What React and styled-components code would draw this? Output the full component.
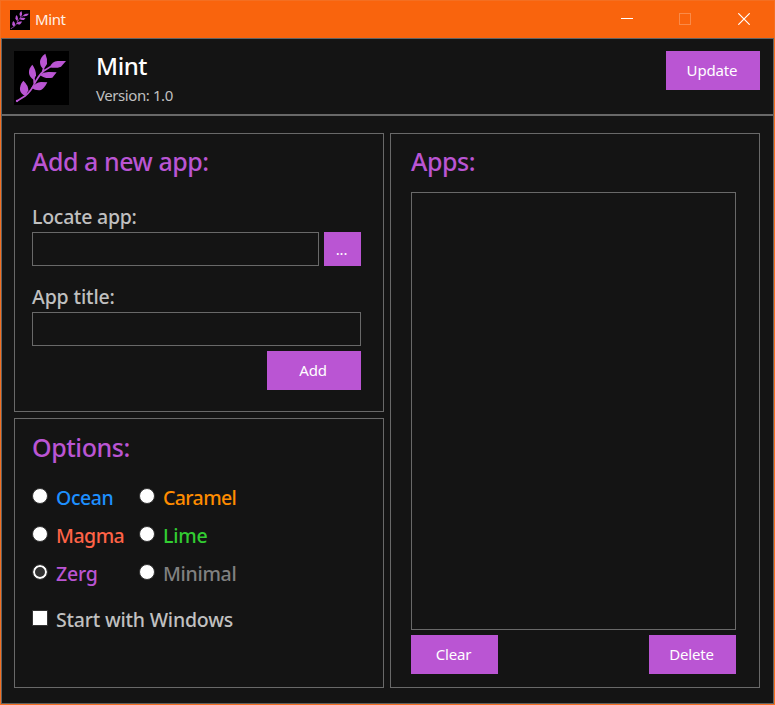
import React, { useState } from 'react';
import styled, { createGlobalStyle } from 'styled-components';

const accent = '#ba55d3';
const line = '#696969';

const GlobalStyle = createGlobalStyle`
  * { box-sizing: border-box; }
  body { margin: 0; background: #141414; font-family: 'Noto Sans', 'Open Sans', sans-serif; }
`;

const Window = styled.div`
  width: 775px;
  height: 705px;
  display: flex;
  flex-direction: column;
  border: 1px solid #f46f21;
  background: #141414;
`;

const TitleBar = styled.header`
  height: 37px;
  flex: none;
  display: flex;
  align-items: center;
  padding-left: 9px;
  background: #f9640d;
  color: #fff;
`;

const WindowTitle = styled.span`
  flex: 1;
  margin-left: 5px;
  padding-bottom: 2px;
  font-size: 15px;
  line-height: 20px;
  letter-spacing: -0.4px;
  color: #fff0e6;
`;

const WindowControl = styled.button`
  width: ${({ $wide }) => ($wide ? 60 : 58)}px;
  height: 37px;
  padding: 0 0 1px;
  border: 0;
  background: none;
  color: ${({ $dim }) => ($dim ? '#fa8a48' : '#fff')};
  display: flex;
  align-items: center;
  justify-content: center;
`;

const Client = styled.div`
  flex: 1;
  display: flex;
  flex-direction: column;
  border: 1px solid #636363;
`;

const AppHeader = styled.div`
  height: 77px;
  flex: none;
  display: flex;
  align-items: flex-start;
  padding: 12px 13px 0 12px;
  border-bottom: 2px solid ${line};
`;

const LogoTile = styled.svg`
  width: ${({ $w }) => $w}px;
  height: ${({ $h }) => $h}px;
  flex: none;
  display: block;
  background: #000;
`;

const Identity = styled.div`
  flex: 1;
  padding: 1px 0 0 27px;
`;

const AppName = styled.h1`
  margin: 0;
  font-size: 24px;
  font-weight: 500;
  line-height: 28px;
  letter-spacing: -0.4px;
  color: #fff;
`;

const Version = styled.p`
  margin: 4px 0 0;
  font-size: 15px;
  line-height: 22px;
  letter-spacing: -0.42px;
  color: #c0c0c0;
`;

const Button = styled.button`
  width: ${({ $width }) => $width}px;
  height: ${({ $height = 39 }) => $height}px;
  flex: none;
  padding: 0 2px ${({ $height = 39 }) => ($height === 39 ? 2 : 0)}px 0;
  border: 0;
  background: ${accent};
  color: #fff;
  font: 400 15px/22px 'Noto Sans', 'Open Sans', sans-serif;
  letter-spacing: -0.15px;
`;

const Main = styled.main`
  flex: 1;
  display: grid;
  grid-template-columns: 370px 370px;
  grid-template-rows: 279px 270px;
  gap: 6px;
  padding: 17px 13px 15px 12px;
`;

const Panel = styled.section`
  display: flex;
  flex-direction: column;
  border: 1px solid ${line};
  padding: ${({ $pad }) => $pad};
  grid-column: ${({ $column = 1 }) => $column};
  grid-row: ${({ $rows }) => $rows};
`;

const Heading = styled.h2`
  margin: 0;
  font-size: 25px;
  font-weight: 500;
  line-height: 34px;
  letter-spacing: -0.45px;
  color: ${accent};
`;

const FieldLabel = styled.label`
  margin: ${({ $top }) => $top}px 0 2px;
  font-size: 19.5px;
  font-weight: 500;
  line-height: 26px;
  letter-spacing: ${({ $track }) => $track}px;
  color: #c0c0c0;
`;

const FieldRow = styled.div`
  display: flex;
  gap: 5px;
`;

const TextField = styled.input`
  flex: 1;
  min-width: 0;
  height: 34px;
  padding: 0 6px;
  border: 1px solid ${line};
  border-radius: 0;
  outline: 0;
  background: transparent;
  color: #c0c0c0;
  font: 400 16px 'Noto Sans', sans-serif;
`;

const ButtonRow = styled.div`
  display: flex;
  justify-content: ${({ $justify }) => $justify};
  margin-top: 5px;
`;

const ThemeGrid = styled.div`
  display: grid;
  grid-template-columns: 107px 1fr;
  grid-auto-rows: 38px;
  margin: 15px 0 8px;
`;

const Option = styled.label`
  display: flex;
  align-items: center;
  gap: 8px;
  height: 38px;
  font-size: 19.5px;
  font-weight: 500;
  line-height: 26px;
  letter-spacing: ${({ $track }) => $track}px;
  white-space: nowrap;
  color: ${({ $color }) => $color};
`;

const Radio = styled.input`
  appearance: none;
  width: 16px;
  height: 16px;
  flex: none;
  margin: 0 0 4px;
  border: 1px solid #333;
  border-radius: 50%;
  background: #fff;

  &:checked {
    background: #333;
    box-shadow: inset 0 0 0 2px #fff;
  }
`;

const Checkbox = styled.input`
  appearance: none;
  width: 16px;
  height: 16px;
  flex: none;
  margin: 0 0 4px;
  border: 1px solid #333;
  background: #fff;

  &:checked {
    box-shadow: inset 0 0 0 3px #fff;
    background: #333;
  }
`;

const AppList = styled.div`
  height: 438px;
  margin-top: 14px;
  border: 1px solid ${line};
`;

function Sprig({ w, h }) {
  return (
    <LogoTile $w={w} $h={h} viewBox="27 18 165 162" preserveAspectRatio="none" aria-hidden="true">
      <g fill={accent}>
        <path d="M121 26Q128 42 126 57L116 73Q105 65 105 51Q106 36 121 26Z" />
        <path d="M183 48L168 65Q152 71 134 67Q141 49 158 48Z" />
        <path d="M82 59Q93 74 93 91L87 105Q73 96 72 84Q71 70 82 59Z" />
        <path d="M155 82L142 98Q120 103 104 89Q118 79 135 81Z" />
        <path d="M127 112Q119 129 108 135Q93 138 79 128Q92 113 108 111Z" />
        <path d="M55 107Q70 121 70 136L62 153Q47 147 45 135Q44 119 55 107Z" />
        <circle cx="36" cy="168" r="3.5" />
      </g>
      <path
        d="M36 168L60 153Q78 139 87 119Q100 92 116 78L138 64M87 101L88 119M116 70L112 83"
        fill="none"
        stroke={accent}
        strokeWidth="5"
      />
    </LogoTile>
  );
}

const themes = [
  { name: 'Ocean', color: '#1e90ff', track: -0.4 },
  { name: 'Caramel', color: '#ff8c00', track: -0.6 },
  { name: 'Magma', color: '#ff6347', track: -0.5 },
  { name: 'Lime', color: '#32cd32', track: -0.25 },
  { name: 'Zerg', color: '#ba55d3', track: -0.2 },
  { name: 'Minimal', color: '#808080', track: -0.3 },
];

export default function App() {
  const [theme, setTheme] = useState('Zerg');

  return (
    <>
      <GlobalStyle />
      <Window>
        <TitleBar>
          <Sprig w={20} h={20} />
          <WindowTitle>Mint</WindowTitle>
          <WindowControl aria-label="Minimize">
            <svg width="12" height="12" viewBox="0 0 12 12">
              <path d="M0 5.5H12" stroke="currentColor" />
            </svg>
          </WindowControl>
          <WindowControl $dim aria-label="Maximize">
            <svg width="12" height="12" viewBox="0 0 12 12">
              <rect x=".5" y=".5" width="11" height="11" fill="none" stroke="currentColor" />
            </svg>
          </WindowControl>
          <WindowControl $wide aria-label="Close">
            <svg width="12" height="12" viewBox="0 0 12 12">
              <path d="M.3.3L11.7 11.7M11.7.3L.3 11.7" stroke="currentColor" strokeWidth="1.2" />
            </svg>
          </WindowControl>
        </TitleBar>
        <Client>
          <AppHeader>
            <Sprig w={55} h={54} />
            <Identity>
              <AppName>Mint</AppName>
              <Version>Version: 1.0</Version>
            </Identity>
            <Button $width={94}>Update</Button>
          </AppHeader>
          <Main>
            <Panel $rows="1" $pad="10px 22px 0 17px">
              <Heading>Add a new app:</Heading>
              <FieldLabel htmlFor="path" $top={26} $track={-0.25}>Locate app:</FieldLabel>
              <FieldRow>
                <TextField id="path" />
                <Button $width={37} $height={34}>...</Button>
              </FieldRow>
              <FieldLabel htmlFor="title" $top={18} $track={-0.12}>App title:</FieldLabel>
              <FieldRow>
                <TextField id="title" />
              </FieldRow>
              <ButtonRow $justify="flex-end">
                <Button $width={94}>Add</Button>
              </ButtonRow>
            </Panel>
            <Panel $rows="2" $pad="11px 22px 0 17px">
              <Heading>Options:</Heading>
              <ThemeGrid>
                {themes.map(({ name, color, track }) => (
                  <Option key={name} $color={color} $track={track}>
                    <Radio
                      type="radio"
                      name="theme"
                      checked={theme === name}
                      onChange={() => setTheme(name)}
                    />
                    {name}
                  </Option>
                ))}
              </ThemeGrid>
              <Option $color="#c0c0c0" $track={-0.2}>
                <Checkbox type="checkbox" />
                Start with Windows
              </Option>
            </Panel>
            <Panel $column={2} $rows="1 / 3" $pad="10px 23px 0 20px">
              <Heading>Apps:</Heading>
              <AppList />
              <ButtonRow $justify="space-between">
                <Button $width={87}>Clear</Button>
                <Button $width={87}>Delete</Button>
              </ButtonRow>
            </Panel>
          </Main>
        </Client>
      </Window>
    </>
  );
}
